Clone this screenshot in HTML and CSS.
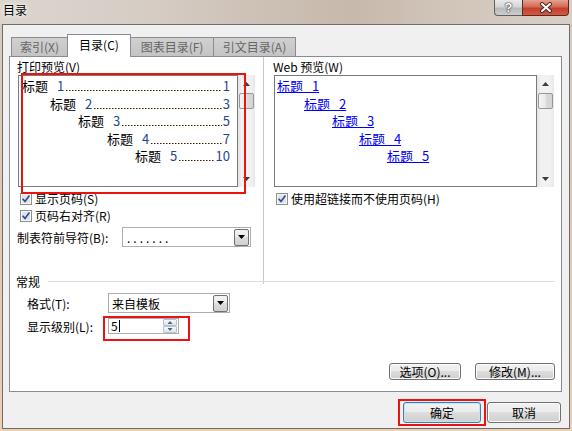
FILE: index.html
```html
<!DOCTYPE html>
<html lang="zh-CN">
<head>
    <meta charset="UTF-8">
    <title>目录</title>
    <link rel="stylesheet" href="styles.css">
</head>
<body>
<div class="window">
    <div class="titlebar">
        <div class="title">目录</div>
        <div class="caption">
            <div class="cap-help">?</div>
            <div class="cap-close">
                <svg width="14" height="11" viewBox="0 0 14 11">
                    <path d="M3 2 L11 9 M11 2 L3 9" stroke="#4a2a22" stroke-width="4" stroke-linecap="round"/>
                    <path d="M3 2 L11 9 M11 2 L3 9" stroke="#ffffff" stroke-width="2" stroke-linecap="round"/>
                </svg>
            </div>
        </div>
    </div>

    <div class="dialog">
        <div class="tabs">
            <div class="tab t1">索引(X)</div>
            <div class="tab t2 active">目录(C)</div>
            <div class="tab t3">图表目录(F)</div>
            <div class="tab t4">引文目录(A)</div>
        </div>

        <div class="panel">
            <div class="top">
                <!-- 打印预览 -->
                <div class="col col-left">
                    <div class="label">打印预览(V)</div>
                    <div class="preview">
                        <div class="box box-print">
                            <div class="toc-line"><span class="head">标题</span><span class="num">1</span><span class="leader"></span><span class="page">1</span></div>
                            <div class="toc-line lv2"><span class="head">标题</span><span class="num">2</span><span class="leader"></span><span class="page">3</span></div>
                            <div class="toc-line lv3"><span class="head">标题</span><span class="num">3</span><span class="leader"></span><span class="page">5</span></div>
                            <div class="toc-line lv4"><span class="head">标题</span><span class="num">4</span><span class="leader"></span><span class="page">7</span></div>
                            <div class="toc-line lv5"><span class="head">标题</span><span class="num">5</span><span class="leader"></span><span class="page">10</span></div>
                        </div>
                        <div class="vscroll"><i class="arrow up"></i><i class="thumb"></i><i class="arrow down"></i></div>
                    </div>
                    <div class="check">
                        <svg class="cb" width="12" height="12" viewBox="0 0 12 12"><rect x="0.5" y="0.5" width="11" height="11" fill="#f6f6f6" stroke="#8e8f8f"/><rect x="2" y="2" width="8" height="8" fill="#dfe3ea"/><path d="M2.6 5.8 L5 8.4 L9.4 2.6" fill="none" stroke="#2c4a96" stroke-width="1.6"/></svg>
                        <span>显示页码(S)</span>
                    </div>
                    <div class="check">
                        <svg class="cb" width="12" height="12" viewBox="0 0 12 12"><rect x="0.5" y="0.5" width="11" height="11" fill="#f6f6f6" stroke="#8e8f8f"/><rect x="2" y="2" width="8" height="8" fill="#dfe3ea"/><path d="M2.6 5.8 L5 8.4 L9.4 2.6" fill="none" stroke="#2c4a96" stroke-width="1.6"/></svg>
                        <span>页码右对齐(R)</span>
                    </div>
                    <div class="field">
                        <span class="field-label">制表符前导符(B):</span>
                        <div class="combo combo-leader"><span class="dots">.......</span><span class="drop"></span></div>
                    </div>
                </div>

                <div class="divider"></div>

                <!-- Web 预览 -->
                <div class="col col-right">
                    <div class="label">Web 预览(W)</div>
                    <div class="preview">
                        <div class="box box-web">
                            <div class="web-line"><a>标题 1</a></div>
                            <div class="web-line lv2"><a>标题 2</a></div>
                            <div class="web-line lv3"><a>标题 3</a></div>
                            <div class="web-line lv4"><a>标题 4</a></div>
                            <div class="web-line lv5"><a>标题 5</a></div>
                        </div>
                        <div class="vscroll"><i class="arrow up"></i><i class="thumb"></i><i class="arrow down"></i></div>
                    </div>
                    <div class="check">
                        <svg class="cb" width="12" height="12" viewBox="0 0 12 12"><rect x="0.5" y="0.5" width="11" height="11" fill="#f6f6f6" stroke="#8e8f8f"/><rect x="2" y="2" width="8" height="8" fill="#dfe3ea"/><path d="M2.6 5.8 L5 8.4 L9.4 2.6" fill="none" stroke="#2c4a96" stroke-width="1.6"/></svg>
                        <span>使用超链接而不使用页码(H)</span>
                    </div>
                </div>
            </div>

            <!-- 常规 -->
            <div class="group">
                <div class="group-head"><span>常规</span><div class="rule"></div></div>
                <div class="row row-format">
                    <span class="row-label">格式(T):</span>
                    <div class="combo combo-format"><span>来自模板</span><span class="drop"></span></div>
                </div>
                <div class="row row-level">
                    <span class="row-label">显示级别(L):</span>
                    <div class="spin">
                        <span>5</span><span class="caret"></span>
                        <div class="spin-btns"><i class="spin-up"></i><i class="spin-down"></i></div>
                    </div>
                </div>
            </div>

            <div class="panel-btns">
                <button class="btn btn-options">选项(O)...</button>
                <button class="btn btn-modify">修改(M)...</button>
            </div>
        </div>

        <div class="footer">
            <button class="btn btn-ok">确定</button>
            <button class="btn btn-cancel">取消</button>
        </div>
    </div>

    <!-- 红色标注框 -->
    <div class="mark mark-preview"></div>
    <div class="mark mark-spin"></div>
    <div class="mark mark-ok"></div>
</div>
</body>
</html>
```

FILE: styles.css
```css
* {
    margin: 0;
    padding: 0;
    box-sizing: border-box;
}

html, body {
    width: 572px;
    height: 431px;
    overflow: hidden;
}

body {
    font-family: "Noto Sans CJK SC", "Liberation Sans", sans-serif;
    font-size: 12px;
    color: #000;
    background: #e6cbb0;
}

.window {
    position: relative;
    width: 572px;
    height: 431px;
    padding: 0 2px 2px 2px;
    display: flex;
    flex-direction: column;
    background: linear-gradient(to bottom, #d6ccc3 0%, #dfc7b0 45%, #eecfb0 100%);
}

/* title bar */
.titlebar {
    height: 24px;
    margin: 0 -2px;
    flex-shrink: 0;
    display: flex;
    justify-content: space-between;
    align-items: flex-start;
    background: linear-gradient(to right, #dcd5ce 0%, #d6cdc5 25%, #cdc1b6 45%, #c7b9ab 62%, #d2c6bb 80%, #d9cfc6 100%);
}

.title {
    padding: 3px 0 0 3px;
    line-height: 14px;
    font-size: 12px;
    text-shadow: 0 0 6px #fff, 0 0 3px #fff;
}

.caption {
    display: flex;
    margin-right: 3px;
}

.cap-help {
    width: 28px;
    height: 16px;
    border: 1px solid #5e5e5e;
    border-top: none;
    border-right: none;
    border-radius: 0 0 0 4px;
    background: linear-gradient(to bottom, #e9e9e9 0%, #d6d6d6 45%, #b9b9b9 55%, #cdcdcd 100%);
    text-align: center;
    font-family: "Liberation Sans", sans-serif;
    font-weight: 700;
    font-size: 13px;
    line-height: 15px;
    color: #fff;
    text-shadow: 0 0 1px #333, 0 0 1px #333, 0 0 2px #555;
}

.cap-close {
    width: 47px;
    height: 16px;
    border: 1px solid #5a2a22;
    border-top: none;
    border-radius: 0 0 4px 0;
    background: linear-gradient(to bottom, #e6a090 0%, #d46a55 45%, #c0402c 55%, #d45a40 100%);
    display: flex;
    justify-content: center;
    align-items: center;
}

/* dialog body */
.dialog {
    height: 405px;
    flex-shrink: 0;
    border: 1px solid #6d6d6d;
    background: #f0f0f0;
    display: flex;
    flex-direction: column;
}

.tabs {
    height: 22px;
    margin-top: 9px;
    padding-left: 8px;
    display: flex;
    align-items: flex-end;
    flex-shrink: 0;
}

.tab {
    height: 19px;
    border: 1px solid #898c95;
    border-bottom: none;
    background: linear-gradient(to bottom, #d0d0d0, #c4c4c4);
    color: #666;
    display: flex;
    justify-content: center;
    align-items: center;
    line-height: 14px;
}

.tab + .tab {
    margin-left: -1px;
}

.t1 { width: 57px; }
.t2 { width: 64px; }
.t3 { width: 84px; }
.t4 { width: 83px; }

.tab.active {
    position: relative;
    z-index: 1;
    height: 23px;
    margin-bottom: -1px;
    padding-bottom: 2px;
    background: #fff;
    color: #000;
}

.panel {
    height: 336px;
    margin: 0 7px 0 6px;
    flex-shrink: 0;
    border: 1px solid #898c95;
    background: #fff;
    display: flex;
    flex-direction: column;
}

.top {
    height: 217px;
    padding: 0 7px 0 8px;
    display: flex;
    flex-shrink: 0;
}

.col {
    padding-top: 2px;
}

.col-left { width: 237px; }
.col-right { width: 280px; }

.label {
    height: 16px;
    line-height: 16px;
    margin-left: -1px;
}

.divider {
    width: 1px;
    margin: 0 10px -10px 8px;
    background: #c3c9cf;
}

.preview {
    height: 112px;
    display: flex;
}

.box {
    border: 1px solid #7a7a7a;
    background: #fff;
    padding-top: 1px;
    overflow: hidden;
}

.box-print {
    width: 220px;
    padding-left: 3px;
    padding-right: 7px;
}

.box-web {
    width: 263px;
    padding-left: 2px;
}

.toc-line {
    display: flex;
    height: 17.6px;
    line-height: 17.6px;
    font-size: 13px;
}

.toc-line .head { color: #000; }

.toc-line .num,
.toc-line .page {
    color: #23468f;
}

.toc-line .num {
    margin-left: 9px;
}

.toc-line .leader {
    flex: 1;
    margin: 0 1px 0 2px;
    background: linear-gradient(to right, #1e1e1e 0, #1e1e1e 1px, #b98a4e 1px, #b98a4e 2px, transparent 2px) 0 13px / 3px 1px repeat-x;
}

.lv2 { padding-left: 28px; }
.lv3 { padding-left: 56px; }
.lv4 { padding-left: 85px; }
.lv5 { padding-left: 113px; }

.web-line {
    height: 17.6px;
    line-height: 17.6px;
    font-size: 13px;
}

.web-line a {
    color: #0000ff;
    text-decoration: underline;
    word-spacing: 6px;
}

.box-web .lv2 { padding-left: 27px; }
.box-web .lv3 { padding-left: 55px; }
.box-web .lv4 { padding-left: 82px; }
.box-web .lv5 { padding-left: 110px; }

/* scroll bars */
.vscroll {
    width: 17px;
    display: flex;
    flex-direction: column;
    align-items: center;
    background: linear-gradient(to right, #e4e4e4, #f2f2f2 25%, #f2f2f2 75%, #e8e8e8);
}

.arrow {
    display: block;
    width: 7px;
    height: 4px;
    background: #3c3c3c;
}

.arrow.up {
    margin-top: 7px;
    clip-path: polygon(50% 0, 100% 100%, 0 100%);
}

.arrow.down {
    margin-top: auto;
    margin-bottom: 6px;
    clip-path: polygon(0 0, 100% 0, 50% 100%);
}

.thumb {
    display: block;
    width: 15px;
    height: 16px;
    margin-top: 7px;
    border: 1px solid #979797;
    border-radius: 2px;
    background: linear-gradient(to right, #f4f4f4 0%, #e9e9e9 50%, #d9d9d9 51%, #d4d4d4 100%);
}

/* check boxes */
.check {
    height: 17px;
    display: flex;
    align-items: center;
    padding-left: 2px;
}

.preview + .check {
    margin-top: 3px;
}

.cb {
    margin-right: 3px;
    flex-shrink: 0;
}

.field {
    height: 20px;
    margin-top: 3px;
    display: flex;
    align-items: center;
}

.field-label {
    width: 105px;
    margin-left: -1px;
}

/* combo boxes */
.combo {
    height: 20px;
    border: 1px solid #abadb3;
    background: #fff;
    display: flex;
    align-items: center;
    padding-left: 3px;
}

.combo-leader { width: 129px; }

.combo-format {
    width: 122px;
    font-size: 12px;
}

.dots {
    letter-spacing: 3px;
    padding-left: 1px;
}

.drop {
    width: 15px;
    height: 17px;
    margin-left: auto;
    margin-right: 1px;
    border: 1px solid #707070;
    border-radius: 2px;
    background: linear-gradient(to bottom, #f2f2f2 0%, #ebebeb 49%, #dddddd 50%, #cfcfcf 100%);
    display: flex;
    justify-content: center;
    align-items: center;
}

.drop::after {
    content: "";
    width: 7px;
    height: 4px;
    background: #000;
    clip-path: polygon(0 0, 100% 0, 50% 100%);
}

/* 常规 */
.group-head {
    height: 14px;
    padding-left: 6px;
    display: flex;
    align-items: center;
}

.rule {
    flex: 1;
    height: 1px;
    margin: 0 6px 0 8px;
    background: #d5dfe5;
}

.row {
    display: flex;
    align-items: center;
    padding-left: 17px;
}

.row-label {
    width: 81px;
}

.row-format {
    height: 20px;
    margin-top: 5px;
}

.row-level {
    height: 18px;
    margin-top: 4px;
}

.spin {
    width: 71px;
    height: 16px;
    border: 1px solid #abadb3;
    display: flex;
    align-items: center;
    padding-left: 2px;
    line-height: 14px;
}

.caret {
    width: 1px;
    height: 12px;
    margin-left: 1px;
    background: #000;
}

.spin-btns {
    width: 14px;
    height: 14px;
    margin-left: auto;
    margin-right: 1px;
    display: flex;
    flex-direction: column;
}

.spin-btns i {
    display: flex;
    justify-content: center;
    align-items: center;
    height: 7px;
    border: 1px solid #b7c2cc;
    border-radius: 1px;
    background: linear-gradient(to bottom, #f6f8fa, #dfe5eb);
}

.spin-btns i::after {
    content: "";
    width: 5px;
    height: 3px;
    background: #4d6185;
}

.spin-up::after { clip-path: polygon(50% 0, 100% 100%, 0 100%); }
.spin-down::after { clip-path: polygon(0 0, 100% 0, 50% 100%); }

/* buttons */
.btn {
    font-family: "Noto Sans CJK SC", "Liberation Sans", sans-serif;
    font-size: 12px;
    color: #000;
    border: 1px solid #707070;
    border-radius: 3px;
    background: linear-gradient(to bottom, #f2f2f2 0%, #ebebeb 49%, #dddddd 50%, #cfcfcf 100%);
    box-shadow: inset 0 0 0 1px #fbfbfb;
    line-height: 14px;
}

.panel-btns {
    margin-top: auto;
    margin-bottom: 11px;
    padding-right: 6px;
    display: flex;
    justify-content: flex-end;
    gap: 14px;
}

.panel-btns .btn { height: 17px; }
.btn-options { width: 72px; }
.btn-modify { width: 80px; }

.footer {
    padding: 10px 8px 0 0;
    display: flex;
    justify-content: flex-end;
    gap: 6px;
}

.footer .btn { height: 21px; }
.btn-ok {
    width: 78px;
    border-color: #3c7fb1;
    box-shadow: inset 0 0 0 1px #c4e5f6;
}
.btn-cancel { width: 74px; }

/* red annotation frames */
.mark {
    position: absolute;
    border: 2px solid #ee1111;
}

.mark-preview {
    left: 21px;
    top: 73px;
    width: 225px;
    height: 121px;
}

.mark-spin {
    left: 103px;
    top: 316px;
    width: 87px;
    height: 25px;
}

.mark-ok {
    left: 398px;
    top: 399px;
    width: 88px;
    height: 27px;
}
```
